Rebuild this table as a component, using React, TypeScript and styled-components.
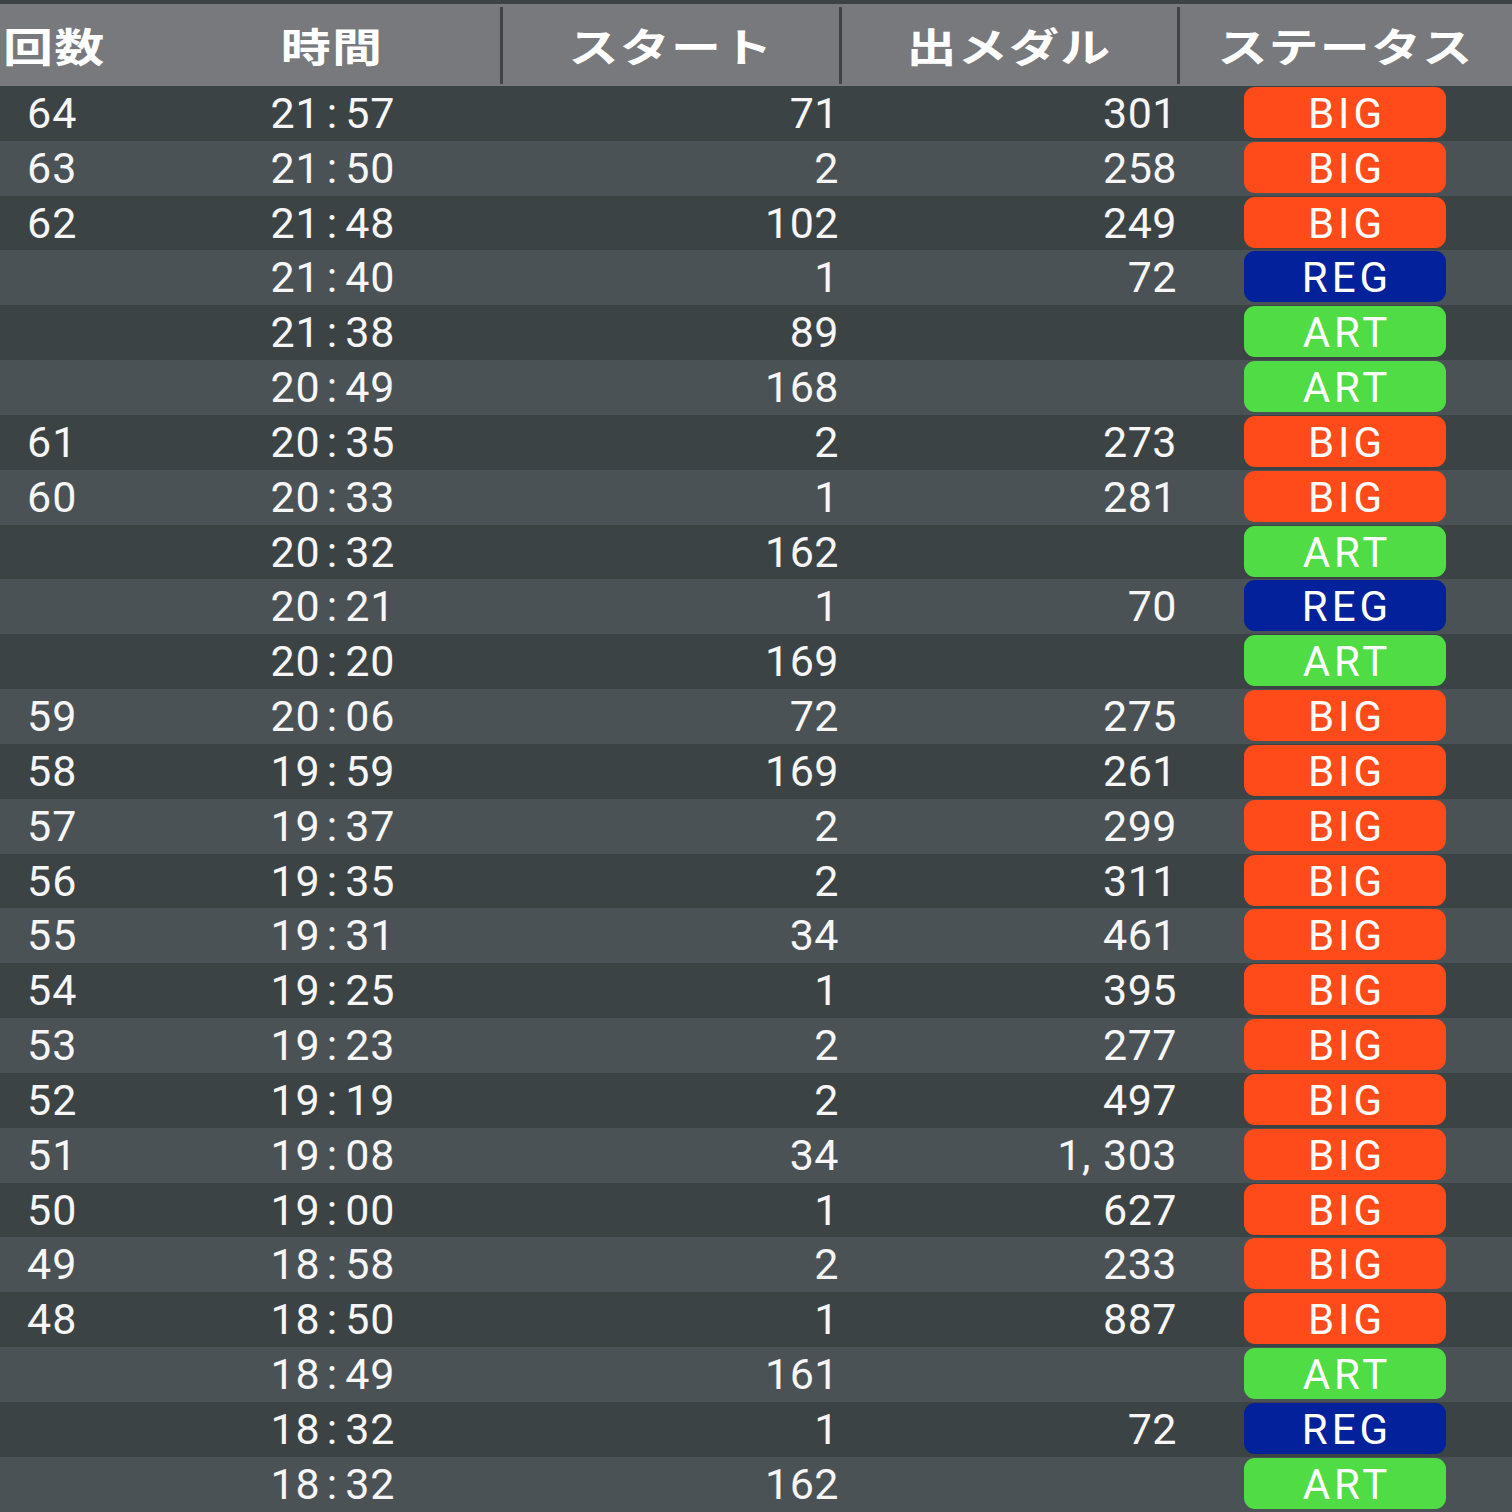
import React from 'react';
import styled, {createGlobalStyle} from "styled-components";

type Status = 'BIG' | 'REG' | 'ART'

type RowType = {
    count: string
    time: string
    start: string
    medal: string
    status: Status
}

const rows: RowType[] = [
    {count: '64', time: '21:57', start: '71', medal: '301', status: 'BIG'},
    {count: '63', time: '21:50', start: '2', medal: '258', status: 'BIG'},
    {count: '62', time: '21:48', start: '102', medal: '249', status: 'BIG'},
    {count: '', time: '21:40', start: '1', medal: '72', status: 'REG'},
    {count: '', time: '21:38', start: '89', medal: '', status: 'ART'},
    {count: '', time: '20:49', start: '168', medal: '', status: 'ART'},
    {count: '61', time: '20:35', start: '2', medal: '273', status: 'BIG'},
    {count: '60', time: '20:33', start: '1', medal: '281', status: 'BIG'},
    {count: '', time: '20:32', start: '162', medal: '', status: 'ART'},
    {count: '', time: '20:21', start: '1', medal: '70', status: 'REG'},
    {count: '', time: '20:20', start: '169', medal: '', status: 'ART'},
    {count: '59', time: '20:06', start: '72', medal: '275', status: 'BIG'},
    {count: '58', time: '19:59', start: '169', medal: '261', status: 'BIG'},
    {count: '57', time: '19:37', start: '2', medal: '299', status: 'BIG'},
    {count: '56', time: '19:35', start: '2', medal: '311', status: 'BIG'},
    {count: '55', time: '19:31', start: '34', medal: '461', status: 'BIG'},
    {count: '54', time: '19:25', start: '1', medal: '395', status: 'BIG'},
    {count: '53', time: '19:23', start: '2', medal: '277', status: 'BIG'},
    {count: '52', time: '19:19', start: '2', medal: '497', status: 'BIG'},
    {count: '51', time: '19:08', start: '34', medal: '1,303', status: 'BIG'},
    {count: '50', time: '19:00', start: '1', medal: '627', status: 'BIG'},
    {count: '49', time: '18:58', start: '2', medal: '233', status: 'BIG'},
    {count: '48', time: '18:50', start: '1', medal: '887', status: 'BIG'},
    {count: '', time: '18:49', start: '161', medal: '', status: 'ART'},
    {count: '', time: '18:32', start: '1', medal: '72', status: 'REG'},
    {count: '', time: '18:32', start: '162', medal: '', status: 'ART'},
]

const statusColors: Record<Status, string> = {
    BIG: '#ff4a1a',
    REG: '#02219a',
    ART: '#4fdc44',
}

const columns = '163px 338px 339px 338px 1fr'

// wraps ':' and ',' so they get the wide spacing of the original font
const spaced = (text: string) =>
    text.split(/([:,])/).map((part, i) =>
        part === ':' ? <Colon key={i}>:</Colon> :
            part === ',' ? <Comma key={i}>,</Comma> : part
    )

const GlobalStyle = createGlobalStyle`
  body {
    margin: 0;
    background: #3c4345;
    font-family: Roboto, "Noto Sans CJK JP", sans-serif;
    color: #f6f6f6;
    overflow: hidden;
  }
`

export default function App() {
    return (
        <>
            <GlobalStyle/>
            <Table>
                <Header>
                    <HeadCell $left><HeadText $left>回数</HeadText></HeadCell>
                    <HeadCell><HeadText>時間</HeadText></HeadCell>
                    <HeadCell><HeadText>スタート</HeadText></HeadCell>
                    <HeadCell><HeadText>出メダル</HeadText></HeadCell>
                    <HeadCell><HeadText>ステータス</HeadText></HeadCell>
                </Header>
                {rows.map((r, i) => (
                    <Row key={i} $light={i % 2 === 1}>
                        <Count>{r.count}</Count>
                        <Time>{spaced(r.time)}</Time>
                        <Num>{r.start}</Num>
                        <Num>{spaced(r.medal)}</Num>
                        <StatusCell>
                            <Badge $color={statusColors[r.status]}>{r.status}</Badge>
                        </StatusCell>
                    </Row>
                ))}
            </Table>
        </>
    );
}

const Table = styled.div`
  width: 1512px;
  padding-top: 4px;
`

const Header = styled.div`
  display: grid;
  grid-template-columns: ${columns};
  height: 82px;
  background: #77797c;
`

const HeadCell = styled.div<{ $left?: boolean }>`
  display: flex;
  align-items: center;
  justify-content: ${props => props.$left ? 'flex-start' : 'center'};
  padding-left: ${props => props.$left ? '3px' : '0'};
  position: relative;

  & + & {
    &::before {
      content: "";
      position: absolute;
      left: -1px;
      top: 3px;
      bottom: 2px;
      width: 3px;
      background: #3f4547;
    }
  }
`

const HeadText = styled.span<{ $left?: boolean }>`
  display: inline-block;
  font-family: "Noto Sans CJK JP", sans-serif;
  font-size: 40px;
  font-weight: 700;
  line-height: 1;
  color: #fff;
  letter-spacing: 1px;
  transform: scaleX(1.25);
  transform-origin: ${props => props.$left ? 'left center' : 'center'};
`

const Row = styled.div<{ $light: boolean }>`
  display: grid;
  grid-template-columns: ${columns};
  height: 54.84px;
  background: ${props => props.$light ? '#4a5256' : '#3c4345'};
  font-size: 43px;
  line-height: 54px;
  letter-spacing: 1px;
`

const Count = styled.div`
  padding-left: 27px;
`

const Time = styled.div`
  text-align: center;
  padding-left: 2px;
`

const Colon = styled.span`
  margin: 0 7px 0 6px;
`

const Comma = styled.span`
  margin-right: 12px;
`

const Num = styled.div`
  text-align: right;
  padding-right: 1px;
  letter-spacing: 0.5px;
`

const StatusCell = styled.div`
  display: flex;
  justify-content: center;
  align-items: flex-start;
`

const Badge = styled.div<{ $color: string }>`
  box-sizing: border-box;
  width: 202px;
  height: 51px;
  margin-top: 1px;
  padding-top: 3px;
  border-radius: 11px;
  background: ${props => props.$color};
  color: #fff;
  text-align: center;
  line-height: 48px;
  font-size: 42px;
  letter-spacing: 4px;
  text-indent: 4px;
`
